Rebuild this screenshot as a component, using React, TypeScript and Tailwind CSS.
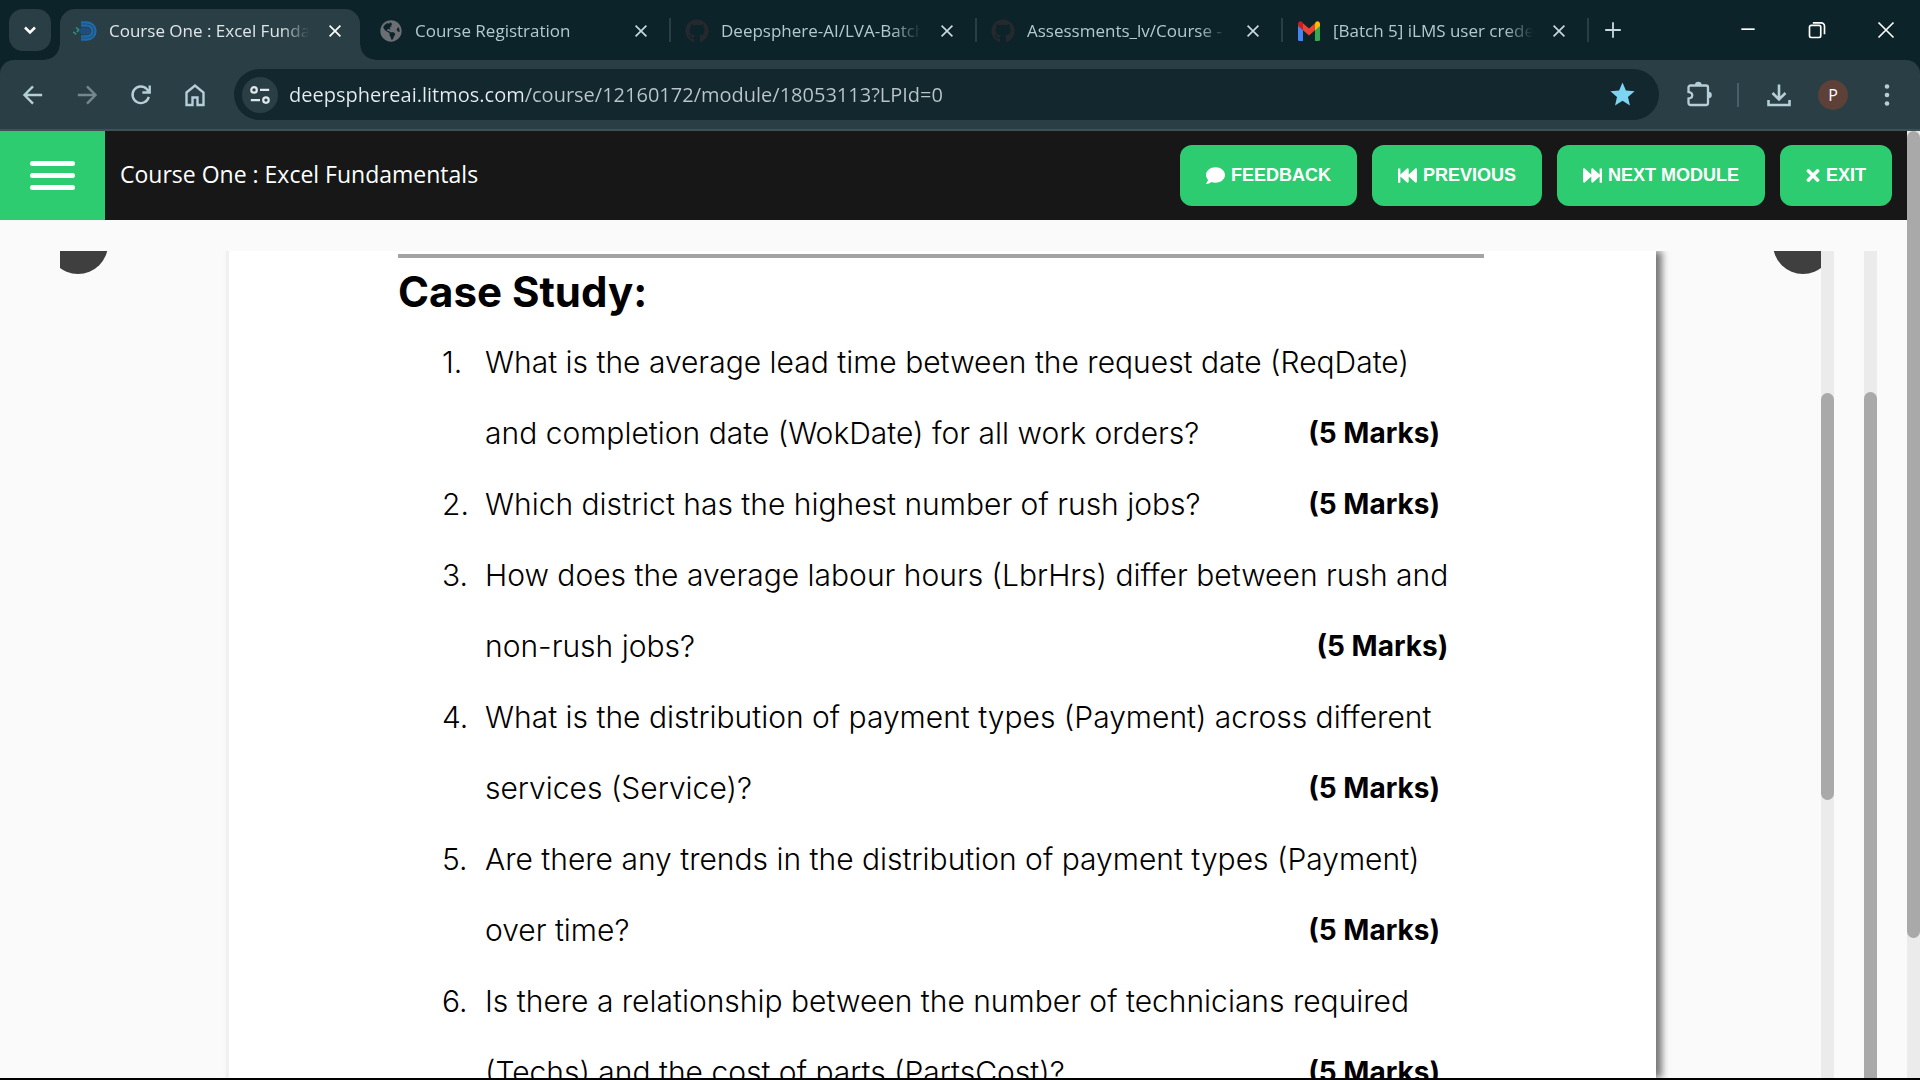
import type { ReactNode } from "react";
import { FaComment, FaFastBackward, FaFastForward, FaGithub, FaGlobeAmericas, FaTimes } from "react-icons/fa";
import { MdStar } from "react-icons/md";

type Tab = { title: string; icon: ReactNode; active?: boolean };
type Question = { lines: string[] };

const questions: Question[] = [
  {
    lines: [
      "What is the average lead time between the request date (ReqDate)",
      "and completion date (WokDate) for all work orders?",
    ],
  },
  { lines: ["Which district has the highest number of rush jobs?"] },
  { lines: ["How does the average labour hours (LbrHrs) differ between rush and", "non-rush jobs?"] },
  { lines: ["What is the distribution of payment types (Payment) across different", "services (Service)?"] },
  { lines: ["Are there any trends in the distribution of payment types (Payment)", "over time?"] },
  {
    lines: [
      "Is there a relationship between the number of technicians required",
      "(Techs) and the cost of parts (PartsCost)?",
    ],
  },
];

function DeepsphereLogo() {
  return (
    <svg viewBox="0 0 24 20" className="h-5 w-6" fill="none">
      <path d="M8 1.500h6a8.500 8.500 0 0 1 0 17H8M8 4.500h6a5.500 5.500 0 0 1 0 11H8" stroke="#1f6aa8" strokeWidth="2.400" />
      <path d="M5 10l4-3.500h5a3.500 3.500 0 0 1 0 7H9z" fill="#1d4f7c" />
      <path d="M3 6.500l2.500 2L4 11M0 11.500h2M2 13.500l1-1.500" stroke="#2d9180" strokeWidth="1.600" />
    </svg>
  );
}

function GmailLogo() {
  return (
    <svg viewBox="0 0 22 20" className="h-5 w-[22px]">
      <path d="M0 3v15.500A1.500 1.500 0 0 0 1.500 20H5V8z" fill="#4285f4" />
      <path d="M22 3v15.500A1.500 1.500 0 0 1 20.500 20H17V8z" fill="#34a853" />
      <path d="M17 2.300v7l5-4.300V3c0-2.300-2.300-3.700-4-2.200z" fill="#fbbc04" />
      <path d="M5 9.300v-7L11 7.500l6-5.200v7l-6 5.200z" fill="#ea4335" />
      <path d="M0 3v2l5 4.300v-7L4 .8C2.300-.7 0 .7 0 3z" fill="#c5221f" />
    </svg>
  );
}

const tabs: Tab[] = [
  { title: "Course One : Excel Fundamentals", icon: <DeepsphereLogo />, active: true },
  { title: "Course Registration", icon: <FaGlobeAmericas className="size-[22px] text-[#6b6e72]" /> },
  { title: "Deepsphere-AI/LVA-Batch5", icon: <FaGithub className="size-6 text-[#25292e]" /> },
  { title: "Assessments_lv/Course - 1", icon: <FaGithub className="size-6 text-[#25292e]" /> },
  { title: "[Batch 5] iLMS user credentials", icon: <GmailLogo /> },
];

function Stroke({ d, className }: { d: string; className: string }) {
  return (
    <svg viewBox="0 0 24 24" fill="none" stroke="currentColor" strokeWidth="2" className={className} aria-hidden="true">
      <path d={d} />
    </svg>
  );
}

function BrowserTab({ title, icon, active }: Tab) {
  return (
    <div className="relative flex h-full w-[306px] shrink items-end">
      {active && (
        <div className="absolute inset-x-[3px] top-[9px] bottom-0 rounded-t-[15px] bg-[#2a3f45]">
          <div className="absolute bottom-0 -left-[15px] size-[15px] bg-[radial-gradient(circle_at_0_0,transparent_14px,#2a3f45_15px)]" />
          <div className="absolute -right-[15px] bottom-0 size-[15px] bg-[radial-gradient(circle_at_100%_0,transparent_14px,#2a3f45_15px)]" />
        </div>
      )}
      <div className="relative flex h-full w-full items-center pt-0.5 pr-[18px] pl-4">
        <span className="flex w-6 shrink-0 justify-center">{icon}</span>
        <span
          className={`ml-3 w-[200px] overflow-hidden text-[17px] leading-6 whitespace-nowrap [mask-image:linear-gradient(to_right,black_86%,transparent_100%)] ${active ? "text-[#e0e6e8]" : "text-[#b3c9d0]"}`}
        >
          {title}
        </span>
        <button aria-label={`Close ${title}`} className={active ? "ml-auto text-white" : "ml-auto text-[#c8d8dd]"}>
          <Stroke d="M5.500 5.500l13 13M18.500 5.500l-13 13" className="size-5" />
        </button>
      </div>
    </div>
  );
}

function WindowBar() {
  return (
    <header className="flex h-[60px] shrink-0 bg-[#0c2329] pl-[9px]">
      <button
        aria-label="Search tabs"
        className="mt-[9px] mr-[6px] flex size-[42px] shrink-0 items-center justify-center rounded-[14px] bg-[#2a3f45] text-white"
      >
        <Stroke d="M6 9l6 6 6-6" className="size-5 stroke-3" />
      </button>
      <nav aria-label="Tabs" className="flex min-w-0">
        {tabs.map((tab, i) => (
          <div key={tab.title} className="flex items-center">
            <BrowserTab {...tab} />
            {i > 0 && <span className="z-10 -mr-[2px] h-6 w-[2px] bg-[#2a3f45]" />}
          </div>
        ))}
      </nav>
      <button aria-label="New tab" className="ml-[15px] text-[#c8d8dd]">
        <Stroke d="M12 3.500v17M3.500 12h17" className="size-[22px]" />
      </button>
      <div className="ml-auto flex items-center gap-[49px] pr-6 text-white">
        <button aria-label="Minimize">
          <Stroke d="M4 11h16" className="size-5" />
        </button>
        <button aria-label="Restore">
          <Stroke
            d="M3 8.500a2 2 0 0 1 2-2h9.500a2 2 0 0 1 2 2V19a2 2 0 0 1-2 2H5a2 2 0 0 1-2-2zM7 3.500h10a4 4 0 0 1 4 4V17"
            className="size-5"
          />
        </button>
        <button aria-label="Close window">
          <Stroke d="M3 3l18 18M21 3L3 21" className="size-5" />
        </button>
      </div>
    </header>
  );
}

function AddressBar() {
  return (
    <div className="bg-[#0c2329]">
      <div className="flex h-[71px] shrink-0 items-center rounded-t-[14px] border-b-2 border-[#424f54] bg-[#2a3f45] pr-5 pl-5 text-[#b5ced7]">
        <div className="flex shrink-0 gap-7">
          <button aria-label="Back">
            <Stroke d="M22 12H3M12 2.500L2.700 12l9.300 9.500" className="size-[26px] stroke-[2.600] p-[2px]" />
          </button>
          <button aria-label="Forward" disabled className="text-[#75868c]">
            <Stroke d="M2 12h19M12 2.500l9.300 9.500-9.300 9.500" className="size-[26px] stroke-[2.600] p-[2px]" />
          </button>
          <button aria-label="Reload">
            <Stroke d="M20.500 14a9 9 0 1 1-2-8.200L21 9M21.500 1.500V9.300H13.500" className="size-[26px] stroke-[2.600] p-[2px]" />
          </button>
          <button aria-label="Home">
            <Stroke d="M3.500 9.500L12 2.500l8.500 7V22h-6v-7.500h-5V22h-6z" className="size-[26px] stroke-[2.400] p-px" />
          </button>
        </div>
        <div className="ml-[26px] flex h-[51px] min-w-0 flex-1 items-center rounded-full bg-[#13282e] pr-[22px] pl-2">
          <button
            aria-label="Site information"
            className="flex size-9 shrink-0 items-center justify-center rounded-full bg-[#2a3f45] text-[#dfe8eb]"
          >
            <svg viewBox="0 0 24 24" className="size-[22px]" fill="none" stroke="currentColor" strokeWidth="2.400">
              <circle cx="5.500" cy="6.500" r="3" />
              <path d="M12 6.500h10M2 17.500h10" />
              <circle cx="18.500" cy="17.500" r="3" />
            </svg>
          </button>
          <input
            aria-label="Address"
            className="ml-[11px] h-8 min-w-0 flex-1 bg-[linear-gradient(to_right,#e6edf0_234px,#bcc6ca_234px)] bg-clip-text text-[20px] leading-8 text-transparent caret-white outline-none"
            defaultValue="deepsphereai.litmos.com/course/12160172/module/18053113?LPId=0"
          />
          <button aria-label="Bookmark" className="text-[#7cd5f3]">
            <MdStar className="size-[29px]" />
          </button>
        </div>
        <button aria-label="Extensions" className="ml-[27px]">
          <svg viewBox="0 0 27 27" className="size-[27px]" fill="none" stroke="currentColor" strokeWidth="2.300">
            <path d="M4.500 4.500h15.500a2 2 0 0 1 2 2v15.500a2 2 0 0 1-2 2H4.500a2 2 0 0 1-2-2v-4.500l2-.5a3 3 0 0 0 0-5.500l-2-.5V6.500a2 2 0 0 1 2-2z" />
            <path d="M9 4a3.300 3.300 0 0 1 6.600 0zM22.500 10.700a3.300 3.300 0 0 1 0 6.600z" fill="currentColor" stroke="none" />
          </svg>
        </button>
        <span className="ml-6 h-6 w-[2px] bg-[#44606a]" />
        <button aria-label="Downloads" className="ml-[26px]">
          <Stroke d="M12 1.500v14M5.500 10l6.500 6.500 6.500-6.500M1.500 17v5h21v-5" className="size-7 stroke-[2.600] p-[2px]" />
        </button>
        <button
          aria-label="Profile"
          className="ml-[25px] flex size-[30px] items-center justify-center rounded-full bg-[#5d4037] text-[16px] text-white"
        >
          P
        </button>
        <button aria-label="Menu" className="ml-[26px]">
          <svg viewBox="0 0 26 26" className="size-[26px]" fill="currentColor">
            <circle cx="13" cy="4.500" r="2.300" />
            <circle cx="13" cy="13" r="2.300" />
            <circle cx="13" cy="21.500" r="2.300" />
          </svg>
        </button>
      </div>
    </div>
  );
}

function ActionButton({ icon, children }: { icon: ReactNode; children: string }) {
  return (
    <button className="flex h-[61px] items-center gap-[6px] rounded-xl bg-[#2ecc71] px-[26px] text-[18px] font-bold whitespace-nowrap text-white">
      {icon}
      {children}
    </button>
  );
}

function ModuleHeader() {
  return (
    <div className="flex h-[89px] shrink-0 items-center bg-[#171717] pr-[15px]">
      <button aria-label="Open menu" className="flex h-full w-[105px] flex-col items-center justify-center gap-[7px] bg-[#2ecc71]">
        <span className="h-[5px] w-[45px] rounded-full bg-white" />
        <span className="h-[5px] w-[45px] rounded-full bg-white" />
        <span className="h-[5px] w-[45px] rounded-full bg-white" />
      </button>
      <h1 className="ml-[15px] pb-[2px] text-[23px] text-white">Course One : Excel Fundamentals</h1>
      <div className="ml-auto flex gap-[15px] font-['Liberation_Sans',sans-serif]">
        <ActionButton icon={<FaComment className="size-[19px]" />}>FEEDBACK</ActionButton>
        <ActionButton icon={<FaFastBackward className="size-[19px]" />}>PREVIOUS</ActionButton>
        <ActionButton icon={<FaFastForward className="size-[19px]" />}>NEXT MODULE</ActionButton>
        <ActionButton icon={<FaTimes className="h-[19px] w-[14px]" />}>EXIT</ActionButton>
      </div>
    </div>
  );
}

function DocumentPage() {
  return (
    <article className="mr-[165px] ml-[166px] h-full flex-1 overflow-hidden border-l-3 border-[#f0f0f0] bg-white pt-[3px] pr-[172px] pl-[169px] font-['Inter',sans-serif] text-black shadow-[6px_0_7px_0_#777]">
      <hr className="border-t-4 border-[#a3a3a3]" />
      <h2 className="mt-1 text-[42px] leading-[60px] font-bold">Case Study:</h2>
      <ol className="mt-[5px] mr-11 ml-11 text-[30px] leading-[71px] font-light">
        {questions.map((question, i) => (
          <li key={question.lines[0]} className="flex">
            <span className="w-[43px] shrink-0">{i + 1}.</span>
            <div className="flex-1 whitespace-nowrap">
              {question.lines.map((line, j) => (
                <p key={line} className="flex justify-between">
                  {line}
                  {j === question.lines.length - 1 && <strong className="text-[28px] font-bold">(5 Marks)</strong>}
                </p>
              ))}
            </div>
          </li>
        ))}
      </ol>
    </article>
  );
}

function Viewer() {
  return (
    <div className="flex min-h-0 flex-1 pt-[31px] pr-[30px] pl-[60px]">
      <div className="relative flex min-w-0 flex-1 overflow-hidden">
        <DocumentPage />
        <button aria-label="Previous page" className="absolute -top-[37px] -left-3 size-[60px] rounded-full bg-[#3f3f3f]" />
        <button aria-label="Next page" className="absolute -top-[37px] -right-3 size-[60px] rounded-full bg-[#3f3f3f]" />
      </div>
      <div className="w-[13px] bg-[#ebebeb] pt-[142px]">
        <div className="h-[407px] rounded-full bg-[#a9a9a9]" />
      </div>
      <div className="ml-[30px] flex w-[13px] flex-col bg-[#ebebeb] pt-[141px]">
        <div className="flex-1 rounded-t-full bg-[#a9a9a9]" />
      </div>
    </div>
  );
}

export default function App() {
  return (
    <div className="flex h-screen flex-col overflow-hidden border-b-2 border-black bg-[#fafafa] font-['Open_Sans','Noto_Sans',sans-serif]">
      <WindowBar />
      <AddressBar />
      <div className="flex min-h-0 flex-1">
        <main className="flex min-w-0 flex-1 flex-col">
          <ModuleHeader />
          <Viewer />
        </main>
        <div className="w-[13px] bg-[#ebebeb]">
          <div className="h-[807px] rounded-full bg-[#a9a9a9]" />
        </div>
      </div>
    </div>
  );
}
